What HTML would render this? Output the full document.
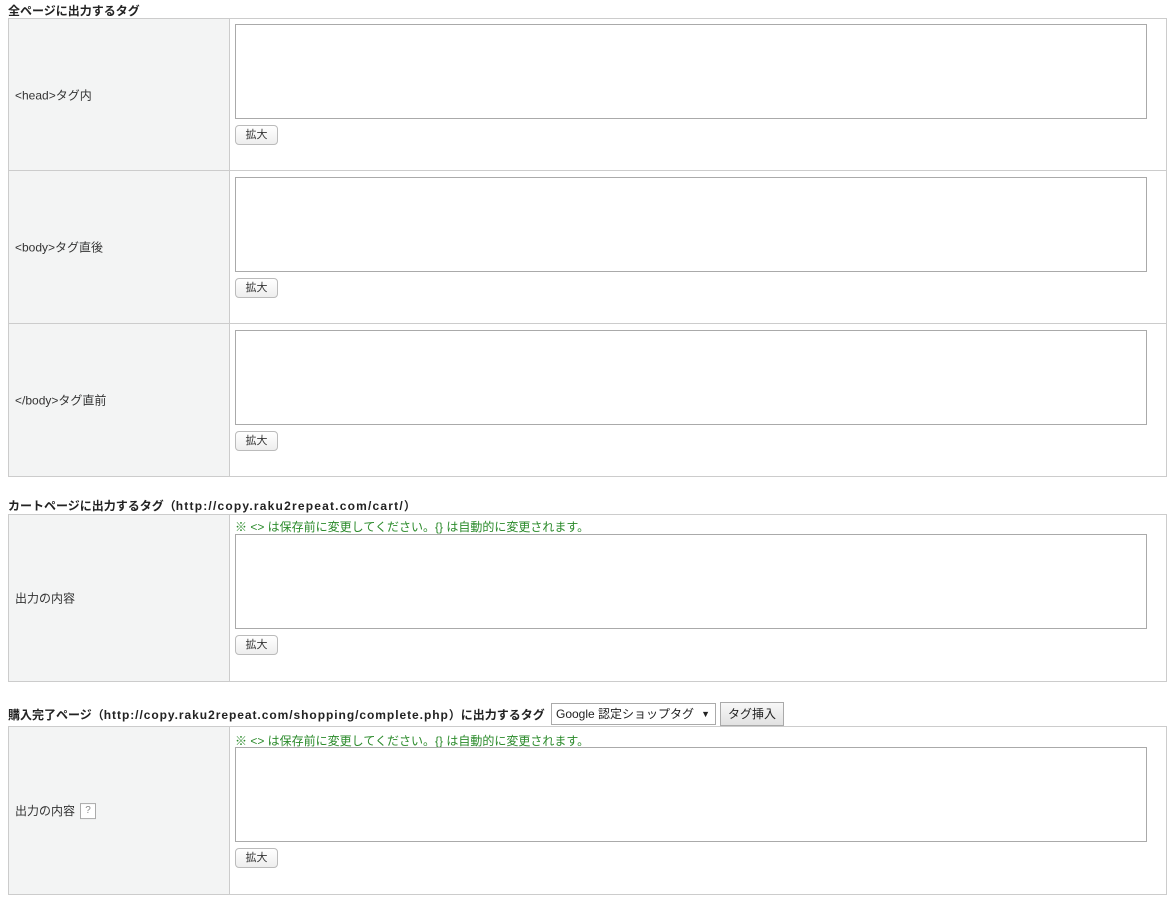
<!DOCTYPE html>
<html><head><meta charset="utf-8"><style>
body{margin:0;background:#fff;font-family:"Liberation Sans","Noto Sans CJK JP",sans-serif;font-size:12px;color:#333;}
.a{position:absolute}
.t{font-weight:bold;color:#222;font-size:12px;white-space:nowrap}
.u{letter-spacing:1.2px}
.tb{position:absolute;left:8px;width:1157px;border:1px solid #ccc;background:#fff}
.lab{position:absolute;left:0;top:0;bottom:0;width:220px;background:#f3f4f4;border-right:1px solid #ccc}
.lab .l{position:absolute;left:6px;top:50%;transform:translateY(-50%);white-space:nowrap}
.ta{position:absolute;left:226px;width:910px;height:93px;border:1px solid #aaa;background:#fff}
.btn{position:absolute;left:226px;width:41px;height:18px;border:1px solid #bbb;border-radius:4px;background:linear-gradient(#fff,#eee);font-size:11px;text-align:center;line-height:18px;color:#333}
.note{position:absolute;left:226px;color:#2a8a2a;font-size:12px;white-space:nowrap}
.q{display:inline-block;border:1px solid #aaa;width:14px;height:14px;line-height:14px;text-align:center;font-size:10px;color:#888;margin-left:5px;vertical-align:middle;background:#fff}
</style></head><body>
<div class="a t" style="left:8px;top:2px">全ページに出力するタグ</div>
<div class="tb" style="top:18px;height:152px"><div class="lab"><span class="l">&lt;head&gt;タグ内</span></div><div class="ta" style="top:5px"></div><div class="btn" style="top:106px">拡大</div></div>
<div class="tb" style="top:170px;height:152px"><div class="lab"><span class="l">&lt;body&gt;タグ直後</span></div><div class="ta" style="top:6px"></div><div class="btn" style="top:107px">拡大</div></div>
<div class="tb" style="top:323px;height:152px"><div class="lab"><span class="l">&lt;/body&gt;タグ直前</span></div><div class="ta" style="top:6px"></div><div class="btn" style="top:107px">拡大</div></div>

<div class="a t" style="left:8px;top:497px">カートページに出力するタグ（<span class="u">http://copy.raku2repeat.com/cart/</span>）</div>
<div class="tb" style="top:514px;height:166px"><div class="lab"><span class="l">出力の内容</span></div><div class="note" style="top:3px">※ &lt;&gt; は保存前に変更してください。{} は自動的に変更されます。</div><div class="ta" style="top:19px"></div><div class="btn" style="top:120px">拡大</div></div>

<div class="a t" style="left:8px;top:706px">購入完了ページ（<span class="u" style="letter-spacing:0.95px">http://copy.raku2repeat.com/shopping/complete.php</span>）に出力するタグ</div>
<div class="a" style="left:551px;top:703px;border:1px solid #aaa;background:#fff;line-height:20px;padding-left:4px;box-sizing:border-box;width:165px;height:22px;font-size:12px;color:#222">Google 認定ショップタグ <span style="position:absolute;right:5px;font-size:9px">▼</span></div>
<div class="a" style="left:720px;top:702px;width:62px;height:22px;border:1px solid #aaa;background:linear-gradient(#f8f8f8,#e2e2e2);text-align:center;line-height:22px;color:#222">タグ挿入</div>
<div class="tb" style="top:726px;height:167px"><div class="lab"><span class="l">出力の内容<span class="q">?</span></span></div><div class="note" style="top:5px">※ &lt;&gt; は保存前に変更してください。{} は自動的に変更されます。</div><div class="ta" style="top:20px"></div><div class="btn" style="top:121px">拡大</div></div>
</body></html>
